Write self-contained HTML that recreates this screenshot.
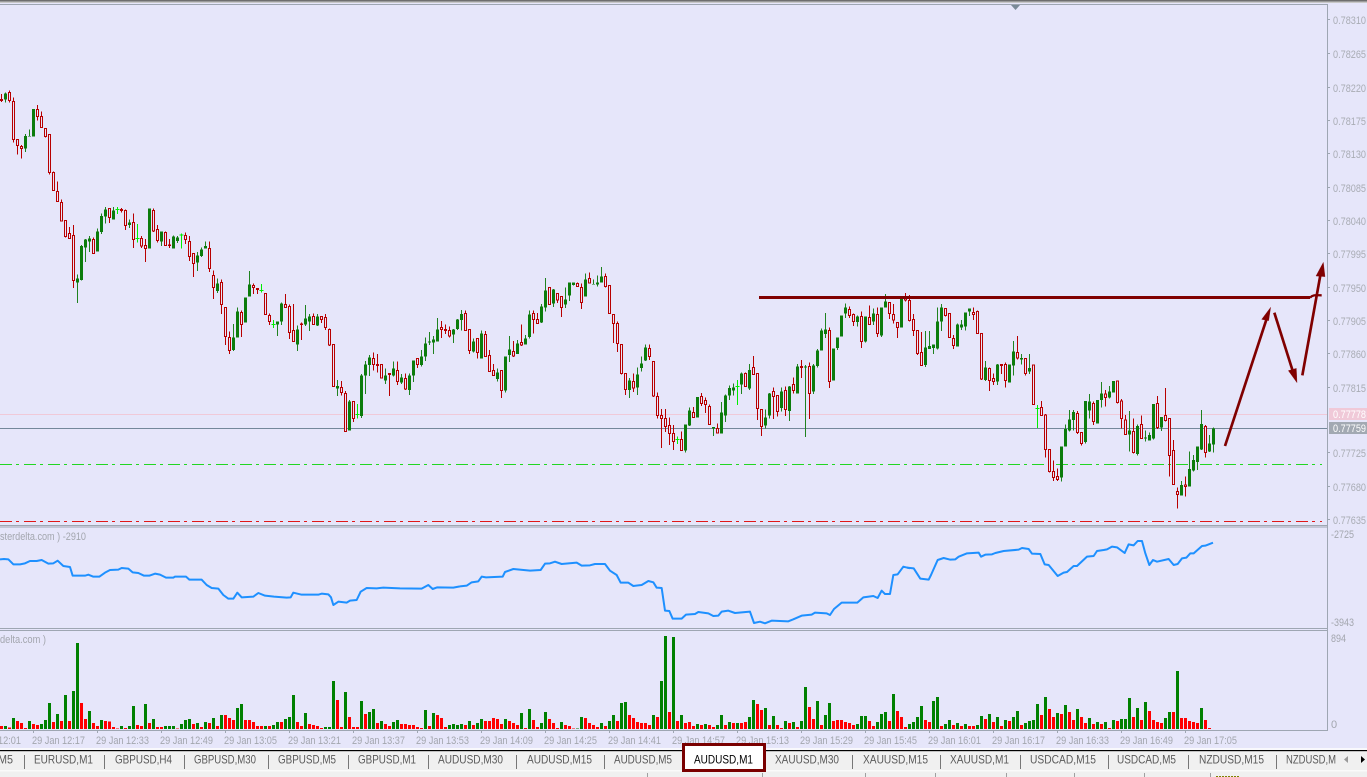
<!DOCTYPE html>
<html lang="en"><head><meta charset="utf-8"><title>AUDUSD,M1</title>
<style>
html,body{margin:0;padding:0;background:#e6e6fa;overflow:hidden}
svg{display:block}
text{font-family:"Liberation Sans",sans-serif}
.rw{stroke:#b80000;stroke-width:3;fill:none}
.gw{stroke:#1f821f;stroke-width:3;fill:none}
.bw{stroke:#00ee00;stroke-width:3;fill:none}
.gb{stroke:#0c7c0c;stroke-width:9;fill:none}
.rb{stroke:#b80000;stroke-width:3;fill:#e6e6fa}
.p{font-size:11px;fill:#a9acb4}
.t{font-size:11px;fill:#a3a6ae}
.tab{font-size:12px;fill:#5a5a5a}
.vg{stroke:#008000;stroke-width:9;fill:none}
.vr{stroke:#ff0000;stroke-width:9;fill:none}
.bl{stroke:#1e90ff;stroke-width:6;fill:none;stroke-linejoin:round}
</style></head><body>
<svg xmlns="http://www.w3.org/2000/svg" width="1367" height="777" viewBox="0 0 1367 777">
<rect width="1367" height="777" fill="#e6e6fa"/>
<rect width="1367" height="1.5" fill="#6e6e6e"/>
<rect y="1.5" width="1367" height="1.5" fill="#c8c8c8"/>
<path d="M0 4.5H1327.5V730.5H0M0 525.5H1327.5M0 527H1327.5M0 628.5H1327.5M0 630.5H1327.5" stroke="#9ea6b2" fill="none"/>
<path d="M1011 5h9l-4.500 5z" fill="#7a8a98"/>
<path d="M1327 19.500h3M1327 53.500h3M1327 87.500h3M1327 120.500h3M1327 153.500h3M1327 187.500h3M1327 220.500h3M1327 253.500h3M1327 287.500h3M1327 320.500h3M1327 353.500h3M1327 387.500h3M1327 452.500h3M1327 486.500h3M1327 519.500h3" stroke="#9ea6b2"/>
<path d="M33.500 730v3M97.500 730v3M161.500 730v3M225.500 730v3M289.500 730v3M353.500 730v3M417.500 730v3M481.500 730v3M545.500 730v3M609.500 730v3M673.500 730v3M737.500 730v3M801.500 730v3M865.500 730v3M929.500 730v3M993.500 730v3M1057.500 730v3M1121.500 730v3M1185.500 730v3" stroke="#9ea6b2"/>

<path d="M0 414.500H1327" stroke="#f0c9d8"/>
<path d="M0 428.500H1327" stroke="#74889a"/>
<path d="M0 464.500H1322" stroke="#22d622" stroke-dasharray="12 4 3 5"/>
<path d="M0 521.500H1322" stroke="#e01818" stroke-dasharray="12 4 3 5"/>

<g shape-rendering="crispEdges">
<g transform="translate(.17,80) scale(.33333)">
<path class="rw" d="M4 42V66M28 32V68M40 52V188M52 178V224M64 195V236M112 75V122M124 94V143M136 145V173M148 163V284M160 274V332M172 304V365M184 358V425M196 421V473M208 441V475M220 435V624M280 473V521M328 385V429M364 384V398M376 388V450M400 400V504M424 468V504M436 477V546M460 385V456M472 435V488M496 454V497M508 477V504M556 457V492M568 468V543M580 520V591M628 484V576M640 571V657M664 598V702M676 682V795M688 754V822M724 692V771M760 610V642M772 625V642M796 640V704M808 700V735M856 642V683M868 673V777M880 672V784M904 727V780M940 700V735M964 710V729M976 702V750M988 745V798M1000 793V920"/>
<path class="gw" d="M16 38V68M76 162V216M88 148V170M100 87V170M232 583V669M244 495V602M256 477V546M268 468V516M292 445V515M304 400V462M316 381V430M340 381V419M388 418V444M448 385V506M484 454V498M520 466V506M532 468V489M592 516V573M604 502V531M616 484V506M652 595V639M700 732V813M712 682V773M736 652V728M748 573V650M832 724V768M844 667V735M892 736V813M916 675V738M928 702V753M952 702V738M1012 900V948"/>
<path class="bw" d="M352 381V402M346 388h12M412 432V488M406 475h12M544 460V506M538 465h12M784 612V638M778 632h12M820 720V744M814 733h12"/>
<path class="gb" d="M16 40V58M76 168V206M88 168V170M100 87V170M232 595V608M244 498V600M256 478V503M268 475V485M292 454V515M304 408V456M316 388V410M340 391V419M388 427V435M448 385V506M484 454V485M520 469V506M532 472V483M592 526V548M604 508V528M616 498V506M652 610V633M700 772V810M712 694V773M736 652V728M748 613V650M832 724V734M844 670V725M892 748V794M916 715V734M928 709V725M952 709V737M1012 918V926"/>
<path class="rb" d="M1 58h6V62h-6zM25 37h6V62h-6zM37 64h6V178h-6zM49 178h6V196h-6zM61 199h6V205h-6zM109 88h6V110h-6zM121 110h6V143h-6zM133 145h6V170h-6zM145 163h6V278h-6zM157 277h6V332h-6zM169 334h6V365h-6zM181 367h6V423h-6zM193 421h6V470h-6zM205 460h6V475h-6zM217 466h6V602h-6zM277 478h6V521h-6zM325 385h6V413h-6zM361 388h6V392h-6zM373 391h6V437h-6zM397 427h6V479h-6zM421 475h6V498h-6zM433 496h6V506h-6zM457 391h6V453h-6zM469 448h6V482h-6zM493 457h6V497h-6zM505 495h6V497h-6zM553 466h6V479h-6zM565 484h6V530h-6zM577 520h6V551h-6zM625 505h6V566h-6zM637 586h6V623h-6zM661 607h6V674h-6zM673 682h6V770h-6zM685 772h6V812h-6zM721 697h6V734h-6zM757 616h6V623h-6zM769 625h6V628h-6zM793 640h6V704h-6zM805 706h6V724h-6zM853 673h6V683h-6zM865 679h6V758h-6zM877 752h6V784h-6zM901 732h6V734h-6zM937 709h6V734h-6zM961 710h6V719h-6zM973 712h6V743h-6zM985 748h6V795h-6zM997 793h6V920h-6z"/>
</g>
<g transform="translate(340.17,260) scale(.33333)">
<path class="rw" d="M4 363V406M16 393V515M40 424V486M100 277V332M112 282V338M124 313V356M148 340V408M172 304V375M196 340V390M232 295V324M304 183V234M316 193V222M328 200V232M376 151V212M388 208V282M412 236V296M436 213V290M448 270V335M460 312V347M484 331V414M520 243V291M544 193V258M580 151V220M592 159V191M628 83V134M652 100V129M664 110V171M712 67V80M724 70V147M748 37V71M796 40V83M808 76V160M820 163V249M832 185V276M844 253V344M856 340V405M880 340V396M928 253V300M940 304V411M952 397V476M964 447V564M976 447V516M988 472V555M1000 495V570M1024 514V572"/>
<path class="gw" d="M28 420V512M64 342V474M76 303V402M88 285V348M136 325V372M160 304V350M184 342V372M208 340V405M220 301V366M244 270V319M256 232V303M268 216V255M280 228V282M292 174V245M340 207V249M352 177V210M364 150V212M400 235V278M424 211V296M472 326V365M496 289V398M508 228V306M532 240V282M556 225V254M568 151V235M604 132V189M616 54V155M640 87V141M676 82V144M688 67V123M700 67V77M736 40V110M760 58V74M772 46V80M784 21V68M868 354V414M892 322V405M904 289V335M916 253V303M1036 493V578M1048 442V498"/>
<path class="bw" d="M52 432V476M46 463h12M1012 529V552M1006 538h12"/>
<path class="gb" d="M28 424V512M64 346V468M76 313V347M88 292V315M136 346V362M160 325V347M184 352V368M208 346V390M220 301V347M244 289V315M256 250V290M268 244V248M280 238V248M292 208V245M340 208V224M352 178V207M364 162V180M400 244V275M424 220V296M472 337V357M496 289V392M508 268V285M532 250V282M556 235V254M568 163V231M604 139V188M616 91V143M640 88V131M676 118V134M688 67V107M700 67V75M736 58V110M760 72V74M772 67V74M784 49V68M868 361V390M892 343V383M904 310V324M916 262V302M1036 493V572M1048 451V496"/>
<path class="rb" d="M1 382h6V398h-6zM13 400h6V515h-6zM37 424h6V476h-6zM97 296h6V314h-6zM109 313h6V317h-6zM121 313h6V354h-6zM145 340h6V344h-6zM169 331h6V365h-6zM193 355h6V387h-6zM229 295h6V314h-6zM301 202h6V208h-6zM313 208h6V212h-6zM325 211h6V228h-6zM373 160h6V212h-6zM385 208h6V272h-6zM409 236h6V278h-6zM433 223h6V289h-6zM445 286h6V335h-6zM457 331h6V347h-6zM481 331h6V392h-6zM517 274h6V288h-6zM541 247h6V255h-6zM577 160h6V179h-6zM589 178h6V191h-6zM625 83h6V134h-6zM649 100h6V120h-6zM661 110h6V143h-6zM709 70h6V80h-6zM721 82h6V128h-6zM745 55h6V69h-6zM793 49h6V80h-6zM805 76h6V160h-6zM817 163h6V191h-6zM829 190h6V250h-6zM841 253h6V341h-6zM853 340h6V389h-6zM877 364h6V384h-6zM925 265h6V290h-6zM937 304h6V408h-6zM949 409h6V467h-6zM961 466h6V476h-6zM973 475h6V500h-6zM985 496h6V521h-6zM997 520h6V545h-6zM1021 538h6V572h-6z"/>
</g>
<g transform="translate(680.17,280) scale(.33333)">
<path class="rw" d="M40 381V413M64 339V378M76 352V399M88 373V434M112 430V461M196 277V320M220 228V284M232 280V420M244 388V468M280 322V417M292 346V410M316 320V408M340 292V340M364 240V294M388 247V417M448 142V324M508 79V114M520 100V138M544 94V204M568 76V134M592 82V171M628 68V117M640 72V130M652 127V174M676 39V65M688 45V125M700 102V168M712 152V225M724 156V257M796 85V109M808 100V173M820 165V207M880 82V120M892 92V160M904 160V300M928 263V333M940 280V315M964 253V282M976 248V323M1012 168V238M1036 234V287"/>
<path class="gw" d="M52 351V413M100 441V468M124 366V461M136 343V426M148 317V360M160 310V347M184 278V342M208 252V330M256 388V445M268 339V416M304 323V395M328 318V423M352 252V341M376 255V471M400 252V342M412 207V262M424 145V212M436 99V174M460 205V302M472 172V210M484 106V170M496 70V114M532 106V140M556 109V188M580 85V135M604 82V171M616 42V83M664 52V143M736 153V261M748 153V207M760 193V222M772 82V208M784 72V153M832 130V200M844 120V150M856 97V152M868 85V108M916 243V303M952 252V315M988 253V308M1000 183V287M1024 222V254"/>
<path class="bw" d="M172 300V375M166 319h12"/>
<path class="gb" d="M52 351V413M100 441V445M124 397V461M136 346V407M148 324V347M160 322V332M184 280V314M208 270V325M256 412V437M268 340V407M304 334V384M328 319V393M352 259V341M376 259V263M400 256V335M412 211V258M424 151V212M436 148V162M460 205V302M472 172V204M484 106V170M496 82V101M532 110V126M556 109V185M580 100V125M604 82V167M616 64V83M664 52V143M736 202V255M748 198V207M760 193V204M772 124V206M784 82V125M832 133V200M844 133V143M856 97V140M868 85V95M916 262V300M952 253V305M988 253V308M1000 214V257M1024 234V239"/>
<path class="rb" d="M37 397h6V413h-6zM61 349h6V371h-6zM73 361h6V374h-6zM85 379h6V434h-6zM109 445h6V459h-6zM193 280h6V320h-6zM217 262h6V284h-6zM229 280h6V386h-6zM241 388h6V440h-6zM277 334h6V350h-6zM289 347h6V395h-6zM313 331h6V389h-6zM337 313h6V331h-6zM361 259h6V263h-6zM385 259h6V340h-6zM445 151h6V305h-6zM505 88h6V107h-6zM517 103h6V124h-6zM541 109h6V185h-6zM565 112h6V134h-6zM589 103h6V161h-6zM625 68h6V100h-6zM637 103h6V120h-6zM649 127h6V143h-6zM673 52h6V60h-6zM685 61h6V122h-6zM697 118h6V152h-6zM709 152h6V221h-6zM721 217h6V257h-6zM793 85h6V107h-6zM805 100h6V173h-6zM817 175h6V197h-6zM877 97h6V104h-6zM889 94h6V160h-6zM901 160h6V297h-6zM925 265h6V302h-6zM937 295h6V305h-6zM961 253h6V257h-6zM973 253h6V302h-6zM1009 217h6V234h-6zM1033 235h6V281h-6z"/>
</g>
<g transform="translate(1020.17,250) scale(.33333)">
<path class="rw" d="M40 345V464M64 453V497M76 492V623M88 598V668M100 632V693M112 655V693M172 483V552M184 547V587M220 455V525M256 420V470M292 393V460M304 447V535M316 495V555M340 505V610M364 497V567M412 438V537M436 414V515M448 505V680M460 570V704M472 712V776M496 680V740M556 525V623"/>
<path class="gw" d="M28 312V372M124 589V695M136 523V590M148 480V545M160 480V542M196 453V580M208 432V505M232 450V521M244 396V473M268 408V445M280 393V428M328 483V605M352 524V617M376 541V575M388 547V572M400 462V568M424 501V543M484 693V737M508 605V710M520 615V665M532 590V660M544 480V600M568 555V606M580 533V607"/>
<path class="bw" d="M52 465V534M46 475h12"/>
<path class="gb" d="M28 354V365M124 589V683M136 537V590M148 508V541M160 486V510M196 453V576M208 454V482M232 450V521M244 430V450M268 424V443M280 393V428M328 541V554M352 528V612M376 563V566M388 555V572M400 462V566M424 501V533M484 705V737M508 657V710M520 630V662M532 590V636M544 522V598M568 580V605M580 535V584"/>
<path class="rb" d="M37 345h6V464h-6zM61 472h6V497h-6zM73 495h6V598h-6zM85 598h6V664h-6zM97 664h6V683h-6zM109 680h6V688h-6zM169 490h6V548h-6zM181 547h6V581h-6zM217 460h6V515h-6zM253 432h6V443h-6zM289 393h6V458h-6zM301 453h6V506h-6zM313 510h6V554h-6zM337 544h6V608h-6zM361 523h6V565h-6zM409 460h6V533h-6zM433 496h6V512h-6zM445 505h6V617h-6zM457 601h6V704h-6zM469 724h6V734h-6zM493 705h6V709h-6zM553 529h6V608h-6z"/>
</g>
</g>

<path d="M759 297.500H1310" stroke="#800000" stroke-width="3"/>
<g transform="translate(1020,250) scale(.33333)" fill="#800000" stroke="#800000">
<path d="M870 143C880 133 890 136 905 136" fill="none" stroke-width="7"/>
<path d="M615 588L742 200" fill="none" stroke-width="8"/>
<path d="M725 208L752 172L746 212z"/>
<path d="M763 188L822 375" fill="none" stroke-width="8"/>
<path d="M805 362L831 398L829 355z"/>
<path d="M847 376L903 65" fill="none" stroke-width="8"/>
<path d="M888 78L910 37L915 80z"/>
</g>

<g transform="translate(0,520) scale(.33333)"><path class="bl" d="M0 118L12 117L25 118L40 133L60 133L75 130L90 123L110 123L125 120L145 131L160 130L173 122L190 138L210 141L218 167L255 167L265 164L280 170L298 170L315 158L330 150L355 149L365 144L385 146L398 157L415 159L432 167L448 167L465 161L480 164L498 173L520 173L525 170L558 170L568 179L605 179L620 195L635 204L655 206L670 225L685 236L700 236L712 218L725 232L760 230L775 219L795 227L822 230L860 233L872 232L880 218L905 224L955 224L965 221L985 223L993 232L1000 255L1015 245L1040 248L1050 242L1070 240L1082 215L1100 204L1130 205L1150 203L1200 205L1265 206L1285 195L1298 207L1312 202L1360 203L1380 199"/></g>
<g transform="translate(450,520) scale(.33333)"><path class="bl" d="M30 199L50 197L65 187L85 184L95 170L108 172L158 170L165 156L190 147L240 152L272 150L285 131L300 130L315 125L335 132L380 128L395 137L420 136L435 132L465 132L480 152L500 165L512 188L535 188L550 198L575 195L595 183L610 187L620 203L635 204L645 272L658 273L668 296L695 296L708 284L735 282L745 276L775 280L790 288L805 287L815 275L835 272L855 279L900 275L912 309L930 305L945 310L965 302L1015 304L1030 298L1055 287L1085 284L1095 278L1130 280L1140 285L1152 267L1175 248L1222 248L1240 232L1270 228L1283 234L1295 212L1305 222L1320 222L1330 165L1343 163L1360 140L1380 145"/></g>
<g transform="translate(907,520) scale(.33333)"><path class="bl" d="M0 143L20 145L40 176L65 179L72 165L92 120L110 114L130 119L145 118L155 110L180 100L215 98L222 110L235 104L255 103L265 99L290 93L335 89L345 84L365 87L375 101L400 102L413 133L425 135L452 168L470 158L480 156L500 138L510 138L540 110L560 108L570 93L590 90L600 88L615 80L630 82L653 99L665 73L680 76L692 63L705 63L715 100L727 135L738 120L750 125L785 117L800 135L812 132L825 115L838 113L850 100L860 100L885 78L895 77L918 68"/></g>

<g shape-rendering="crispEdges">
<g transform="translate(.17,520) scale(.33333)">
<path class="vg" d="M16 618V627M40 594V627M88 603V627M124 612V627M136 600V627M148 549V627M172 582V627M196 525V627M220 513V627M232 369V627M268 573V627M304 600V627M364 618V627M388 618V627M400 558V627M436 552V627M460 597V627M496 618V627M508 618V627M520 618V627M544 612V627M556 600V627M568 597V627M592 609V627M616 606V627M640 594V627M664 585V627M712 564V627M724 552V627M796 618V627M820 615V627M832 606V627M856 597V627M868 591V627M880 525V627M916 579V627M976 621V627M988 621V627M1000 483V627M1036 516V627M1084 543V627M1108 576V627M1120 567V627M1144 603V627M1180 606V627M1192 600V627M1276 570V627M1300 579V627M1348 615V627M1360 612V627M1372 615V627"/>
<path class="vr" d="M4 618V627M28 623V627M52 603V627M64 609V627M76 624V627M100 612V627M112 615V627M160 606V627M184 603V627M208 603V627M244 549V627M256 597V627M280 609V627M292 618V627M316 603V627M328 605V627M340 621V627M352 625V627M376 624V627M412 615V627M424 618V627M448 609V627M472 621V627M484 621V627M532 625V627M580 612V627M604 621V627M628 609V627M652 618V627M676 585V627M688 594V627M700 600V627M736 600V627M748 600V627M760 606V627M772 618V627M784 618V627M808 618V627M844 606V627M892 606V627M904 618V627M928 612V627M940 615V627M952 618V627M964 624V627M1012 540V627M1024 621V627M1048 591V627M1060 621V627M1072 621V627M1096 582V627M1132 609V627M1156 612V627M1168 618V627M1204 612V627M1216 612V627M1228 615V627M1240 615V627M1252 621V627M1264 624V627M1288 618V627M1312 585V627M1324 594V627M1336 621V627"/>
</g>
<g transform="translate(450.17,520) scale(.33333)">
<path class="vg" d="M34 612V627M58 603V627M82 609V627M94 597V627M166 597V627M214 579V627M238 567V627M274 609V627M286 576V627M334 606V627M382 625V627M394 591V627M454 609V627M478 603V627M490 585V627M514 549V627M526 546V627M610 585V627M634 483V627M646 348V627M670 351V627M694 585V627M742 612V627M766 612V627M802 615V627M814 585V627M838 606V627M862 609V627M898 591V627M910 540V627M946 564V627M970 588V627M1006 603V627M1030 606V627M1054 603V627M1066 501V627M1102 543V627M1126 585V627M1138 549V627M1222 612V627M1234 588V627M1246 588V627M1282 606V627M1294 582V627M1306 576V627M1330 522V627M1378 612V627"/>
<path class="vr" d="M46 615V627M70 615V627M106 603V627M118 603V627M130 594V627M142 597V627M154 612V627M178 603V627M190 609V627M202 615V627M226 624V627M250 600V627M262 621V627M298 597V627M310 609V627M322 624V627M346 615V627M358 618V627M370 625V627M406 594V627M418 609V627M430 615V627M442 621V627M466 618V627M502 603V627M538 585V627M550 594V627M562 606V627M574 609V627M586 609V627M598 615V627M622 591V627M658 576V627M682 603V627M706 609V627M718 606V627M730 618V627M754 615V627M778 615V627M790 621V627M826 615V627M850 609V627M874 609V627M886 606V627M922 552V627M934 570V627M958 615V627M982 615V627M994 624V627M1018 609V627M1042 621V627M1078 561V627M1090 597V627M1114 615V627M1150 603V627M1162 600V627M1174 600V627M1186 606V627M1198 609V627M1210 615V627M1258 603V627M1270 618V627M1318 603V627M1342 573V627M1354 591V627M1366 621V627"/>
</g>
<g transform="translate(907.17,520) scale(.33333)">
<path class="vg" d="M19 606V627M31 591V627M43 558V627M79 543V627M91 531V627M115 612V627M127 600V627M151 609V627M175 612V627M211 615V627M223 588V627M247 582V627M271 591V627M295 600V627M319 591V627M331 573V627M355 609V627M367 603V627M379 600V627M391 552V627M415 531V627M451 579V627M475 555V627M511 567V627M547 594V627M571 606V627M595 606V627M619 600V627M643 597V627M655 597V627M667 534V627M691 564V627M715 546V627M775 594V627M787 576V627M811 453V627M883 564V627"/>
<path class="vr" d="M55 600V627M67 606V627M103 618V627M139 615V627M163 618V627M187 618V627M199 618V627M235 597V627M259 606V627M283 618V627M307 603V627M343 615V627M403 585V627M427 567V627M439 591V627M463 582V627M487 576V627M499 600V627M523 591V627M535 609V627M559 612V627M583 612V627M607 624V627M631 603V627M679 591V627M703 600V627M727 573V627M739 600V627M751 606V627M763 609V627M799 576V627M823 594V627M835 594V627M847 603V627M859 606V627M871 609V627M895 600V627M907 624V627"/>
</g>
</g>

<text class="t" x="0" y="540" textLength="86" lengthAdjust="spacingAndGlyphs">sterdelta.com ) -2910</text>
<text class="t" x="0" y="643" textLength="46" lengthAdjust="spacingAndGlyphs">delta.com )</text>
<text class="t" x="1331" y="538" textLength="23" lengthAdjust="spacingAndGlyphs">-2725</text>
<text class="t" x="1331" y="626" textLength="23" lengthAdjust="spacingAndGlyphs">-3943</text>
<text class="t" x="1331" y="642" textLength="15" lengthAdjust="spacingAndGlyphs">894</text>
<text class="t" x="1331" y="728">0</text>

<text class="p" x="1333" y="24" textLength="33" lengthAdjust="spacingAndGlyphs">0.78310</text>
<text class="p" x="1333" y="58" textLength="33" lengthAdjust="spacingAndGlyphs">0.78265</text>
<text class="p" x="1333" y="92" textLength="33" lengthAdjust="spacingAndGlyphs">0.78220</text>
<text class="p" x="1333" y="125" textLength="33" lengthAdjust="spacingAndGlyphs">0.78175</text>
<text class="p" x="1333" y="158" textLength="33" lengthAdjust="spacingAndGlyphs">0.78130</text>
<text class="p" x="1333" y="192" textLength="33" lengthAdjust="spacingAndGlyphs">0.78085</text>
<text class="p" x="1333" y="225" textLength="33" lengthAdjust="spacingAndGlyphs">0.78040</text>
<text class="p" x="1333" y="258" textLength="33" lengthAdjust="spacingAndGlyphs">0.77995</text>
<text class="p" x="1333" y="292" textLength="33" lengthAdjust="spacingAndGlyphs">0.77950</text>
<text class="p" x="1333" y="325" textLength="33" lengthAdjust="spacingAndGlyphs">0.77905</text>
<text class="p" x="1333" y="358" textLength="33" lengthAdjust="spacingAndGlyphs">0.77860</text>
<text class="p" x="1333" y="392" textLength="33" lengthAdjust="spacingAndGlyphs">0.77815</text>
<rect x="1329" y="408" width="38" height="12" fill="#f0c9d8"/>
<text class="p" x="1333" y="418" textLength="33" lengthAdjust="spacingAndGlyphs" style="fill:#fff">0.77778</text>
<rect x="1329" y="422" width="38" height="12" fill="#a2a9b2"/>
<text class="p" x="1333" y="432" textLength="33" lengthAdjust="spacingAndGlyphs" style="fill:#fff">0.77759</text>
<text class="p" x="1333" y="457" textLength="33" lengthAdjust="spacingAndGlyphs">0.77725</text>
<text class="p" x="1333" y="491" textLength="33" lengthAdjust="spacingAndGlyphs">0.77680</text>
<text class="p" x="1333" y="524" textLength="33" lengthAdjust="spacingAndGlyphs">0.77635</text>

<text class="t" x="-32" y="744" textLength="53" lengthAdjust="spacingAndGlyphs">29 Jan 12:01</text>
<text class="t" x="32" y="744" textLength="53" lengthAdjust="spacingAndGlyphs">29 Jan 12:17</text>
<text class="t" x="96" y="744" textLength="53" lengthAdjust="spacingAndGlyphs">29 Jan 12:33</text>
<text class="t" x="160" y="744" textLength="53" lengthAdjust="spacingAndGlyphs">29 Jan 12:49</text>
<text class="t" x="224" y="744" textLength="53" lengthAdjust="spacingAndGlyphs">29 Jan 13:05</text>
<text class="t" x="288" y="744" textLength="53" lengthAdjust="spacingAndGlyphs">29 Jan 13:21</text>
<text class="t" x="352" y="744" textLength="53" lengthAdjust="spacingAndGlyphs">29 Jan 13:37</text>
<text class="t" x="416" y="744" textLength="53" lengthAdjust="spacingAndGlyphs">29 Jan 13:53</text>
<text class="t" x="480" y="744" textLength="53" lengthAdjust="spacingAndGlyphs">29 Jan 14:09</text>
<text class="t" x="544" y="744" textLength="53" lengthAdjust="spacingAndGlyphs">29 Jan 14:25</text>
<text class="t" x="608" y="744" textLength="53" lengthAdjust="spacingAndGlyphs">29 Jan 14:41</text>
<text class="t" x="672" y="744" textLength="53" lengthAdjust="spacingAndGlyphs">29 Jan 14:57</text>
<text class="t" x="736" y="744" textLength="53" lengthAdjust="spacingAndGlyphs">29 Jan 15:13</text>
<text class="t" x="800" y="744" textLength="53" lengthAdjust="spacingAndGlyphs">29 Jan 15:29</text>
<text class="t" x="864" y="744" textLength="53" lengthAdjust="spacingAndGlyphs">29 Jan 15:45</text>
<text class="t" x="928" y="744" textLength="53" lengthAdjust="spacingAndGlyphs">29 Jan 16:01</text>
<text class="t" x="992" y="744" textLength="53" lengthAdjust="spacingAndGlyphs">29 Jan 16:17</text>
<text class="t" x="1056" y="744" textLength="53" lengthAdjust="spacingAndGlyphs">29 Jan 16:33</text>
<text class="t" x="1120" y="744" textLength="53" lengthAdjust="spacingAndGlyphs">29 Jan 16:49</text>
<text class="t" x="1184" y="744" textLength="53" lengthAdjust="spacingAndGlyphs">29 Jan 17:05</text>

<rect y="748" width="1367" height="2" fill="#f8f8fc"/>
<rect y="751" width="1367" height="26" fill="#f0f0f0"/>
<rect y="770" width="1367" height="1.500" fill="#fafafa"/>
<rect y="750" width="1367" height="1.200" fill="#000"/>
<path d="M24.500 755v14M104.500 755v14M184.500 755v14M268.500 755v14M348.500 755v14M428.500 755v14M516.500 755v14M604.500 755v14M852.500 755v14M940.500 755v14M1020.500 755v14M1108.500 755v14M1188.500 755v14M1276.500 755v14" stroke="#777"/>
<path d="M647.500 773v4M762.500 773v4M865.500 773v4M935.500 773v4M1006.500 773v4M1074.500 773v4M1144.500 773v4M1210.500 773v4" stroke="#a0a0a0"/>
<path d="M1216 776.500h23" stroke="#808000" stroke-dasharray="2 1"/>
<text class="tab" x="-2" y="763.500" textLength="15" lengthAdjust="spacingAndGlyphs">M5</text>
<text class="tab" x="34" y="763.500" textLength="59" lengthAdjust="spacingAndGlyphs">EURUSD,M1</text>
<text class="tab" x="115" y="763.500" textLength="57" lengthAdjust="spacingAndGlyphs">GBPUSD,H4</text>
<text class="tab" x="194" y="763.500" textLength="62" lengthAdjust="spacingAndGlyphs">GBPUSD,M30</text>
<text class="tab" x="278" y="763.500" textLength="58" lengthAdjust="spacingAndGlyphs">GBPUSD,M5</text>
<text class="tab" x="358" y="763.500" textLength="58" lengthAdjust="spacingAndGlyphs">GBPUSD,M1</text>
<text class="tab" x="438" y="763.500" textLength="65" lengthAdjust="spacingAndGlyphs">AUDUSD,M30</text>
<text class="tab" x="527" y="763.500" textLength="65" lengthAdjust="spacingAndGlyphs">AUDUSD,M15</text>
<text class="tab" x="614" y="763.500" textLength="58" lengthAdjust="spacingAndGlyphs">AUDUSD,M5</text>
<rect x="683.500" y="744.500" width="81" height="26" fill="#fff" stroke="#7a0000" stroke-width="3"/>
<text class="tab" x="694" y="763.500" textLength="59" lengthAdjust="spacingAndGlyphs" style="fill:#000">AUDUSD,M1</text>
<text class="tab" x="775" y="763.500" textLength="64" lengthAdjust="spacingAndGlyphs">XAUUSD,M30</text>
<text class="tab" x="863" y="763.500" textLength="65" lengthAdjust="spacingAndGlyphs">XAUUSD,M15</text>
<text class="tab" x="950" y="763.500" textLength="59" lengthAdjust="spacingAndGlyphs">XAUUSD,M1</text>
<text class="tab" x="1030" y="763.500" textLength="66" lengthAdjust="spacingAndGlyphs">USDCAD,M15</text>
<text class="tab" x="1117" y="763.500" textLength="59" lengthAdjust="spacingAndGlyphs">USDCAD,M5</text>
<text class="tab" x="1199" y="763.500" textLength="65" lengthAdjust="spacingAndGlyphs">NZDUSD,M15</text>
<text class="tab" x="1286" y="763.500" textLength="50" lengthAdjust="spacingAndGlyphs">NZDUSD,M</text>
<path d="M1348 756v7l-4-3.500z" fill="#999"/>
<path d="M1361 756v7l4-3.500z" fill="#000"/>
</svg>
</body></html>
